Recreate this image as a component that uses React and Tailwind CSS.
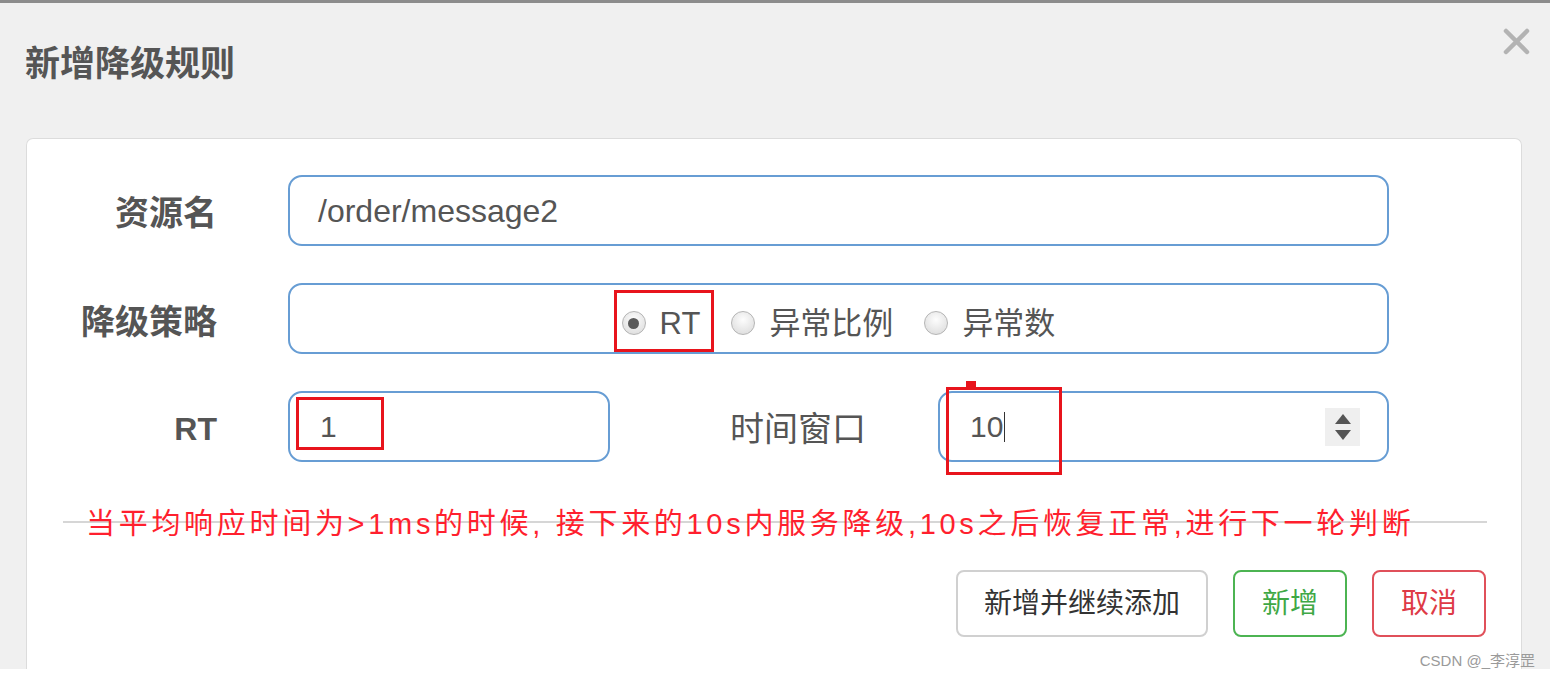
import { useState } from "react";

function Radio({ checked, label }) {
  return (
    <span className="flex items-center gap-[14px]">
      <span
        className={
          "flex items-center justify-center w-[24px] h-[24px] rounded-full border border-[#b5b5b5] " +
          "bg-[radial-gradient(circle_at_50%_35%,#fdfdfd,#d8d8d8)]"
        }
      >
        {checked && <span className="w-[11px] h-[11px] rounded-full bg-[#5a5a5a]" />}
      </span>
      <span className="text-[31px] text-[#555] leading-none">{label}</span>
    </span>
  );
}

function Spinner() {
  return (
    <span className="flex flex-col items-center justify-center gap-[6px] w-[35px] h-[38px] bg-[#efefef]">
      <svg width="16" height="10" viewBox="0 0 16 10">
        <path d="M8 0 L16 10 L0 10 Z" fill="#555" />
      </svg>
      <svg width="16" height="10" viewBox="0 0 16 10">
        <path d="M0 0 L16 0 L8 10 Z" fill="#555" />
      </svg>
    </span>
  );
}

export default function App() {
  const [name] = useState("/order/message2");
  const [rt] = useState("1");
  const [win] = useState("10");

  const inputBox = "h-[71px] rounded-[14px] border-2 border-[#679dd4] bg-white flex items-center";

  return (
    <div className="relative w-[1550px] h-[676px] flex flex-col bg-[#f0f0f0] border-t-[3px] border-[#8c8c8c] font-['Liberation_Sans','Noto_Sans_CJK_SC',sans-serif] overflow-hidden">

      {/* header */}
      <div className="flex justify-between">
        <h1 className="mt-[43px] ml-[25px] text-[35px] leading-none font-bold text-[#555]">
          新增降级规则
        </h1>
        <svg className="mt-[25px] mr-[20px]" width="27" height="27" viewBox="0 0 27 27">
          <path d="M3 3 L24 24 M24 3 L3 24" stroke="#b3b3b3" strokeWidth="4.5" strokeLinecap="round" />
        </svg>
      </div>

      {/* form card */}
      <div className="flex-1 mt-[57px] ml-[26px] mr-[28px] bg-white border border-b-0 border-[#dcdcdc] rounded-t-[7px] pt-[36px]">

        <div className="flex items-center">
          <label className="w-[190px] text-right text-[34px] font-bold text-[#555] leading-none pt-[4px]">资源名</label>
          <div className={inputBox + " ml-[71px] w-[1101px] pl-[28px]"}>
            <span className="text-[32px] text-[#555]">{name}</span>
          </div>
        </div>

        <div className="flex items-center mt-[37px]">
          <label className="w-[190px] text-right text-[34px] font-bold text-[#555] leading-none pt-[6px]">降级策略</label>
          <div className={inputBox + " ml-[71px] w-[1101px] justify-center gap-[31px] pt-[9px]"}>
            <span className="relative">
              <Radio checked label="RT" />
              <span className="absolute left-[-8px] top-[-18px] w-[100px] h-[62px] border-[3px] border-[#e8141c]" />
            </span>
            <Radio label="异常比例" />
            <Radio label="异常数" />
          </div>
        </div>

        <div className="flex items-center mt-[37px]">
          <label className="w-[190px] text-right text-[32px] font-bold text-[#555] leading-none pt-[4px]">RT</label>
          <div className={inputBox + " relative ml-[71px] w-[322px] pl-[30px]"}>
            <span className="text-[30px] text-[#555]">{rt}</span>
            <span className="absolute left-[6px] top-[4px] w-[88px] h-[53px] border-[3px] border-[#e8141c]" />
          </div>
          <label className="w-[256px] text-right text-[34px] text-[#555] leading-none pt-[4px]">时间窗口</label>
          <div className={inputBox + " relative ml-[72px] w-[451px] pl-[30px] pr-[27px] justify-between"}>
            <span className="flex items-center text-[30px] text-[#555]">
              {win}
              <span className="w-px h-[30px] bg-[#333] ml-[1px]" />
            </span>
            <Spinner />
            <span className="absolute left-[6px] top-[-6px] w-[116px] h-[88px] border-[3px] border-[#e8141c]" />
            <span className="absolute left-[26px] top-[-12px] w-[10px] h-[7px] bg-[#e8141c]" />
          </div>
        </div>

        {/* note */}
        <div className="relative mt-[44px] h-[36px]">
          <span className="absolute top-[15px] left-[36px] right-[34px] h-[2px] bg-[#d6d6d6]" />
          <p className="relative pl-[59px] text-[29px] tracking-[3.7px] leading-[36px] text-[#ff1f2e] whitespace-nowrap">
            当平均响应时间为&gt;1ms的时候, 接下来的10s内服务降级,10s之后恢复正常,进行下一轮判断
          </p>
        </div>

        <div className="flex justify-end gap-[25px] mt-[28px] pr-[35px]">
          <button className="w-[252px] h-[67px] rounded-[8px] border-2 border-[#d0d0d0] bg-white text-[28px] text-[#333]">
            新增并继续添加
          </button>
          <button className="w-[114px] h-[67px] rounded-[8px] border-2 border-[#4cb452] bg-white text-[28px] text-[#3fa845]">
            新增
          </button>
          <button className="w-[114px] h-[67px] rounded-[8px] border-2 border-[#e0505a] bg-white text-[28px] text-[#de3a46]">
            取消
          </button>
        </div>
      </div>

      <div className="h-[7px] bg-white" />

      <span className="absolute right-[15px] bottom-[8px] text-[15px] leading-none text-[#9a9a9a]">
        CSDN @_李淳罡
      </span>
    </div>
  );
}
